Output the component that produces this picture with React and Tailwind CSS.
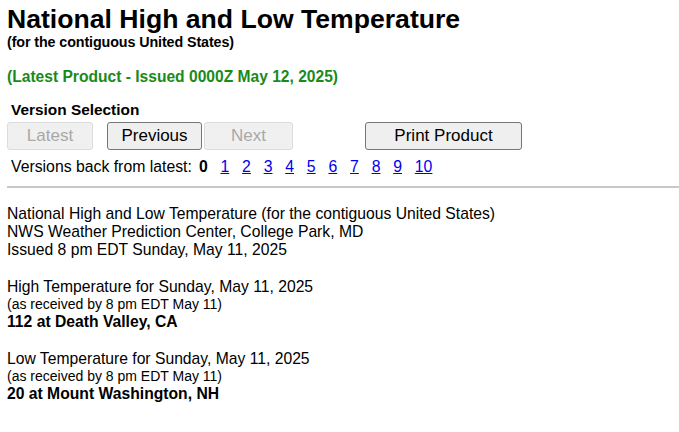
export default function App() {
  const versions = ["1", "2", "3", "4", "5", "6", "7", "8", "9", "10"];
  return (
    <div className="min-h-screen bg-white text-black px-[7px] font-['Liberation_Sans',Arial,sans-serif]">
      <h1 className="text-[26.6px] font-bold leading-[30px] pt-[4px]">National High and Low Temperature</h1>
      <div className="text-[14.3px] font-bold leading-[16px] tracking-[-0.1px]">(for the contiguous United States)</div>
      <div className="mt-[18px] text-[15.6px] font-bold leading-[18px] text-[#1a8a1a]">
        (Latest Product - Issued 0000Z May 12, 2025)
      </div>
      <div className="mt-[15px] px-[4px]">
        <div className="text-[15.4px] font-bold leading-[18px]">Version Selection</div>
      </div>
      <div className="flex items-center mt-[3px]">
        <button disabled className="w-[86px] h-[28px] text-[17px] bg-[#f0f0f0] border border-[#dcdcdc] rounded-[3px] text-[#a8a8a8]">Latest</button>
        <button className="ml-[14px] w-[95px] h-[28px] text-[17px] bg-[#efefef] border border-[#767676] rounded-[3px]">Previous</button>
        <button disabled className="ml-[2px] w-[89px] h-[28px] text-[17px] bg-[#f0f0f0] border border-[#dcdcdc] rounded-[3px] text-[#a8a8a8]">Next</button>
        <button className="ml-[72px] w-[157px] h-[28px] text-[17px] bg-[#efefef] border border-[#767676] rounded-[3px]">Print Product</button>
      </div>
      <div className="flex items-center mt-[8px] px-[4px] text-[15.8px] leading-[18px]">
        <span>Versions back from latest:</span>
        <span className="ml-[7px] font-bold">0</span>
        {versions.map((v) => (
          <a key={v} href="#" className="ml-[12.8px] text-[#0000ee] underline">{v}</a>
        ))}
      </div>
      <hr className="mt-[10px] mr-[-7px] border-t-2 border-[#c8c8c8]" />
      <div className="mt-[17px] text-[15.7px] leading-[18px]">
        <div>National High and Low Temperature (for the contiguous United States)</div>
        <div>NWS Weather Prediction Center, College Park, MD</div>
        <div>Issued 8 pm EDT Sunday, May 11, 2025</div>
        <div className="mt-[19px]">High Temperature for Sunday, May 11, 2025</div>
        <div className="text-[14px] leading-[17px]">(as received by 8 pm EDT May 11)</div>
        <div className="font-bold">112 at Death Valley, CA</div>
        <div className="mt-[19px]">Low Temperature for Sunday, May 11, 2025</div>
        <div className="text-[14px] leading-[17px]">(as received by 8 pm EDT May 11)</div>
        <div className="font-bold">20 at Mount Washington, NH</div>
      </div>
    </div>
  );
}
